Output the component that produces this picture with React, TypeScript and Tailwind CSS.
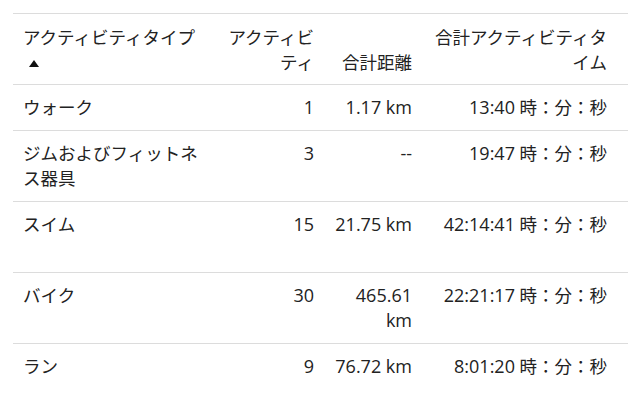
import React from "react";

const rows = [
  { type: "ウォーク", count: "1", dist: "1.17 km", time: "13:40", h: "h-[46px]" },
  { type: "ジムおよびフィットネス器具", count: "3", dist: "--", time: "19:47", h: "h-[70px]" },
  { type: "スイム", count: "15", dist: "21.75 km", time: "42:14:41", h: "h-[71px]" },
  { type: "バイク", count: "30", dist: "465.61 km", time: "22:21:17", h: "h-[71px]" },
  { type: "ラン", count: "9", dist: "76.72 km", time: "8:01:20", h: "h-[71px]" },
];

export default function App() {
  return (
    <div
      className="w-[628px] h-[411px] overflow-hidden bg-white pl-[13px] pt-[13px] text-[17.5px] leading-[25px] text-[#222]"
      style={{ fontFamily: '"Open Sans", "Noto Sans CJK JP", sans-serif' }}
    >
      <table className="table-fixed border-collapse w-[615px]">
        <colgroup>
          <col className="w-[201px]" />
          <col className="w-[110px]" />
          <col className="w-[98px]" />
          <col className="w-[206px]" />
        </colgroup>
        <thead>
          <tr className="border-y border-[#dcdcdc]">
            <th className="align-bottom text-left font-normal pl-[10px] pr-[10px] pt-[11px] pb-[9px]">
              <div>アクティビティタイプ</div>
              <div className="h-[25px] flex items-center">
                <svg width="10" height="7" viewBox="0 0 10 7" className="ml-[6px] mt-[2px]">
                  <polygon points="5,0 10,7 0,7" fill="#111" />
                </svg>
              </div>
            </th>
            <th className="align-bottom text-right font-normal px-[10px] pt-[11px] pb-[9px]">
              アクティビティ
            </th>
            <th className="align-bottom text-right font-normal px-[10px] pt-[11px] pb-[9px]">
              合計距離
            </th>
            <th className="align-bottom text-right font-normal pl-[3px] pr-[21px] pt-[11px] pb-[9px]">
              合計アクティビティタイム
            </th>
          </tr>
        </thead>
        <tbody>
          {rows.map((r) => (
            <tr key={r.type} className="border-t border-[#dcdcdc]">
              <td className={`align-top text-left px-[10px] py-[10px] ${r.h}`}>{r.type}</td>
              <td className="align-top text-right text-[18px] px-[10px] py-[10px]">{r.count}</td>
              <td className="align-top text-right text-[18px] px-[10px] py-[10px]">{r.dist}</td>
              <td className="align-top text-right pl-[3px] pr-[21px] py-[10px]">
                <span className="text-[18px]">{r.time}</span> 時：分：秒
              </td>
            </tr>
          ))}
        </tbody>
      </table>
    </div>
  );
}
